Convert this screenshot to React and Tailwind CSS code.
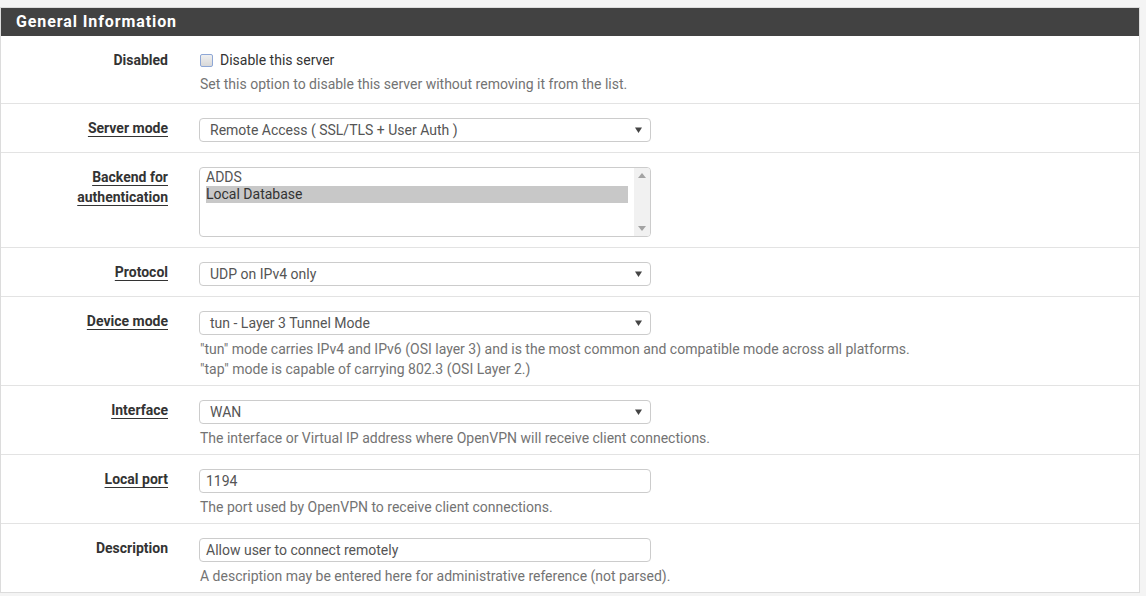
import React from "react";

function Caret() {
  return (
    <svg width="7" height="6" viewBox="0 0 7 6" className="shrink-0">
      <path d="M0 0.5 L7 0.5 L3.5 6 Z" fill="#444" />
    </svg>
  );
}

function Select({ value }) {
  return (
    <div className="w-[452px] h-[24px] border border-[#cccccc] rounded-[4px] bg-white flex items-center pl-[10px] pr-[8px] text-[14px] text-[#555555]">
      <span className="flex-1 leading-[20px]">{value}</span>
      <Caret />
    </div>
  );
}

function TextInput({ value }) {
  return (
    <div className="w-[452px] h-[24px] border border-[#cccccc] rounded-[4px] bg-white flex items-center pl-[6px] text-[14px] text-[#555555]">
      <span className="leading-[20px]">{value}</span>
    </div>
  );
}

function Help({ children }) {
  return <div className="mt-[4px] leading-[20px] text-[14px] text-[#737373] pl-[1px]">{children}</div>;
}

function Label({ children, underline = true }) {
  return (
    <div className="w-[167px] shrink-0 text-right text-[14px] font-bold text-[#333333] leading-[20px]">
      {underline ? (
        <span className="underline underline-offset-[3px] decoration-[1px]">{children}</span>
      ) : (
        <span>{children}</span>
      )}
    </div>
  );
}

function Row({ label, underline, children, pb = "pb-[10px]", last }) {
  return (
    <div className={`flex pt-[14px] ${pb} ${last ? "" : "border-b border-[#e3e3e3]"}`}>
      <Label underline={underline}>{label}</Label>
      <div className="ml-[31px] flex flex-col">{children}</div>
    </div>
  );
}

export default function App() {
  return (
    <div className="w-[1146px] h-[596px] bg-[#f4f4f4] pt-[7px] overflow-hidden" style={{ fontFamily: "Roboto, 'Open Sans', sans-serif" }}>
      <div className="w-[1140px] border border-[#dcdcdc] bg-white">
        <div className="h-[28px] bg-[#424242] text-white font-bold text-[16px] pl-[15px] flex items-center tracking-[0.9px]">
          General Information
        </div>

        <Row label="Disabled" underline={false} pb="pb-[9px]">
          <div className="flex items-center h-[20px] text-[14px] text-[#333333]">
            <div className="w-[13px] h-[13px] rounded-[2px] border border-[#8ea7d6] bg-gradient-to-b from-[#f0f0f0] to-[#d8d8d8] ml-[1px] mr-[7px]" />
            <span>Disable this server</span>
          </div>
          <Help>Set this option to disable this server without removing it from the list.</Help>
        </Row>

        <Row label="Server mode">
          <Select value="Remote Access ( SSL/TLS + User Auth )" />
        </Row>

        <Row label={<>Backend for<br />authentication</>}>
          <div className="w-[452px] h-[70px] border border-[#cccccc] rounded-[4px] bg-white flex text-[14px] text-[#555555] overflow-hidden">
            <div className="flex-1 pl-[6px] pr-[6px] pt-[1px]">
              <div className="leading-[17px]">ADDS</div>
              <div className="leading-[17px] bg-[#c8c8c8] text-[#333333]">Local Database</div>
            </div>
            <div className="w-[16px] bg-[#f1f1f1] flex flex-col justify-between items-center py-[5px]">
              <svg width="8" height="5" viewBox="0 0 8 5"><path d="M0 5 L4 0 L8 5 Z" fill="#a3a3a3" /></svg>
              <svg width="8" height="5" viewBox="0 0 8 5"><path d="M0 0 L8 0 L4 5 Z" fill="#a3a3a3" /></svg>
            </div>
          </div>
        </Row>

        <Row label="Protocol">
          <Select value="UDP on IPv4 only" />
        </Row>

        <Row label="Device mode" pb="pb-[6px]">
          <Select value="tun - Layer 3 Tunnel Mode" />
          <Help>
            "tun" mode carries IPv4 and IPv6 (OSI layer 3) and is the most common and compatible mode across all platforms.
            <br />
            "tap" mode is capable of carrying 802.3 (OSI Layer 2.)
          </Help>
        </Row>

        <Row label="Interface" pb="pb-[6px]">
          <Select value="WAN" />
          <Help>The interface or Virtual IP address where OpenVPN will receive client connections.</Help>
        </Row>

        <Row label="Local port" pb="pb-[6px]">
          <TextInput value="1194" />
          <Help>The port used by OpenVPN to receive client connections.</Help>
        </Row>

        <Row label="Description" underline={false} pb="pb-[6px]" last>
          <TextInput value="Allow user to connect remotely" />
          <Help>A description may be entered here for administrative reference (not parsed).</Help>
        </Row>
      </div>
    </div>
  );
}
